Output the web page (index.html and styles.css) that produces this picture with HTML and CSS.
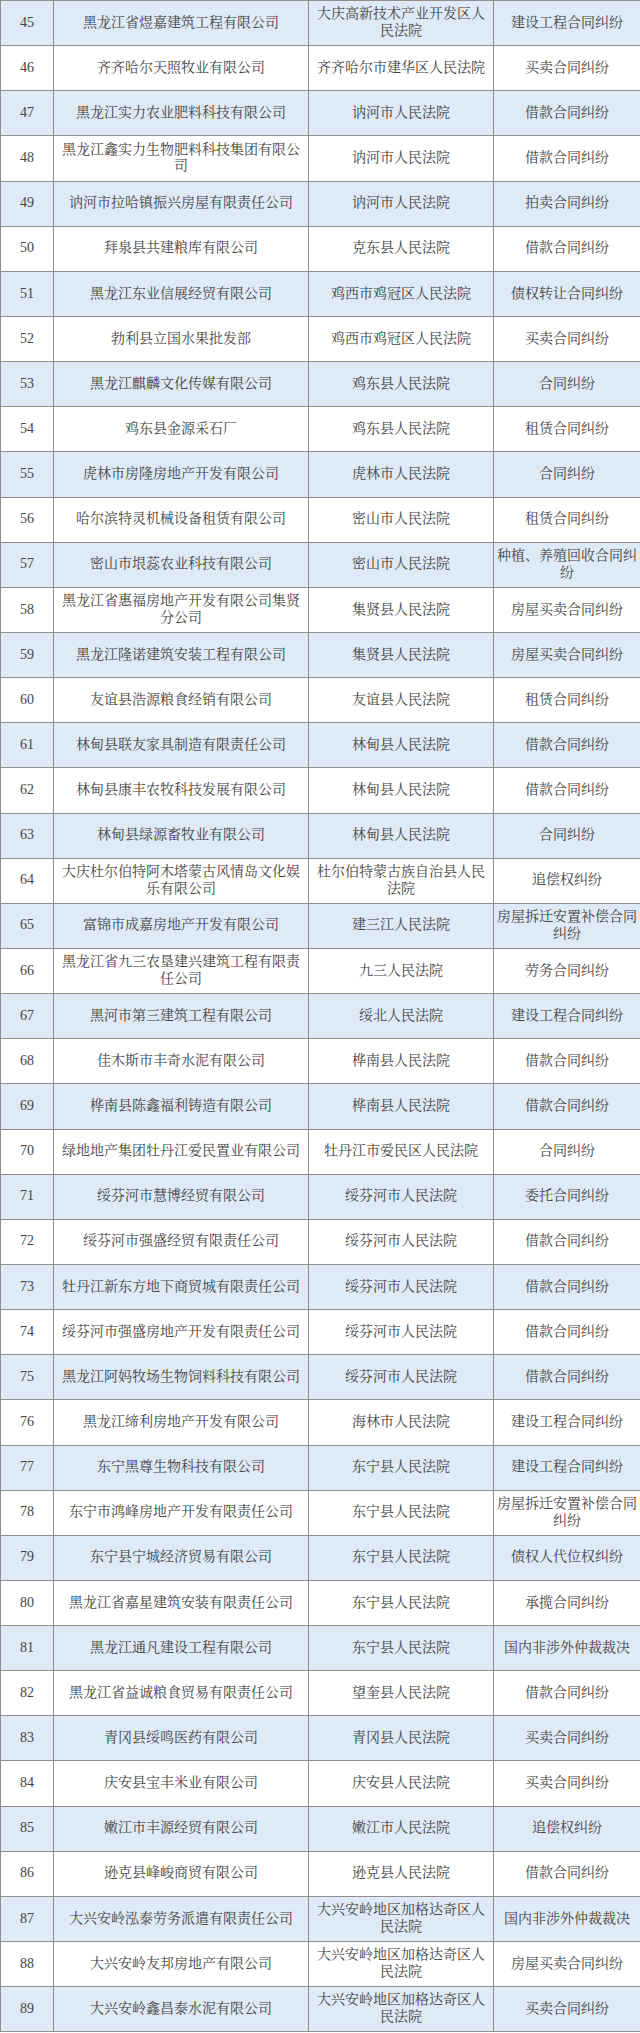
FILE: index.html
```html
<!DOCTYPE html>
<html lang="zh-CN">
<head>
<meta charset="utf-8">
<title>列表</title>
<link rel="stylesheet" href="styles.css">
</head>
<body>
<table class="list">
<tbody>
<tr class="odd"><td class="c-no">45</td><td class="c-co">黑龙江省煜嘉建筑工程有限公司</td><td class="c-court">大庆高新技术产业开发区人民法院</td><td class="c-case">建设工程合同纠纷</td></tr>
<tr><td class="c-no">46</td><td class="c-co">齐齐哈尔天照牧业有限公司</td><td class="c-court">齐齐哈尔市建华区人民法院</td><td class="c-case">买卖合同纠纷</td></tr>
<tr class="odd"><td class="c-no">47</td><td class="c-co">黑龙江实力农业肥料科技有限公司</td><td class="c-court">讷河市人民法院</td><td class="c-case">借款合同纠纷</td></tr>
<tr><td class="c-no">48</td><td class="c-co">黑龙江鑫实力生物肥料科技集团有限公司</td><td class="c-court">讷河市人民法院</td><td class="c-case">借款合同纠纷</td></tr>
<tr class="odd"><td class="c-no">49</td><td class="c-co">讷河市拉哈镇振兴房屋有限责任公司</td><td class="c-court">讷河市人民法院</td><td class="c-case">拍卖合同纠纷</td></tr>
<tr><td class="c-no">50</td><td class="c-co">拜泉县共建粮库有限公司</td><td class="c-court">克东县人民法院</td><td class="c-case">借款合同纠纷</td></tr>
<tr class="odd"><td class="c-no">51</td><td class="c-co">黑龙江东业信展经贸有限公司</td><td class="c-court">鸡西市鸡冠区人民法院</td><td class="c-case">债权转让合同纠纷</td></tr>
<tr><td class="c-no">52</td><td class="c-co">勃利县立国水果批发部</td><td class="c-court">鸡西市鸡冠区人民法院</td><td class="c-case">买卖合同纠纷</td></tr>
<tr class="odd"><td class="c-no">53</td><td class="c-co">黑龙江麒麟文化传媒有限公司</td><td class="c-court">鸡东县人民法院</td><td class="c-case">合同纠纷</td></tr>
<tr><td class="c-no">54</td><td class="c-co">鸡东县金源采石厂</td><td class="c-court">鸡东县人民法院</td><td class="c-case">租赁合同纠纷</td></tr>
<tr class="odd"><td class="c-no">55</td><td class="c-co">虎林市房隆房地产开发有限公司</td><td class="c-court">虎林市人民法院</td><td class="c-case">合同纠纷</td></tr>
<tr><td class="c-no">56</td><td class="c-co">哈尔滨特灵机械设备租赁有限公司</td><td class="c-court">密山市人民法院</td><td class="c-case">租赁合同纠纷</td></tr>
<tr class="odd"><td class="c-no">57</td><td class="c-co">密山市垠蕊农业科技有限公司</td><td class="c-court">密山市人民法院</td><td class="c-case">种植、养殖回收合同纠纷</td></tr>
<tr><td class="c-no">58</td><td class="c-co">黑龙江省惠福房地产开发有限公司集贤分公司</td><td class="c-court">集贤县人民法院</td><td class="c-case">房屋买卖合同纠纷</td></tr>
<tr class="odd"><td class="c-no">59</td><td class="c-co">黑龙江隆诺建筑安装工程有限公司</td><td class="c-court">集贤县人民法院</td><td class="c-case">房屋买卖合同纠纷</td></tr>
<tr><td class="c-no">60</td><td class="c-co">友谊县浩源粮食经销有限公司</td><td class="c-court">友谊县人民法院</td><td class="c-case">租赁合同纠纷</td></tr>
<tr class="odd"><td class="c-no">61</td><td class="c-co">林甸县联友家具制造有限责任公司</td><td class="c-court">林甸县人民法院</td><td class="c-case">借款合同纠纷</td></tr>
<tr><td class="c-no">62</td><td class="c-co">林甸县康丰农牧科技发展有限公司</td><td class="c-court">林甸县人民法院</td><td class="c-case">借款合同纠纷</td></tr>
<tr class="odd"><td class="c-no">63</td><td class="c-co">林甸县绿源畜牧业有限公司</td><td class="c-court">林甸县人民法院</td><td class="c-case">合同纠纷</td></tr>
<tr><td class="c-no">64</td><td class="c-co">大庆杜尔伯特阿木塔蒙古风情岛文化娱乐有限公司</td><td class="c-court">杜尔伯特蒙古族自治县人民法院</td><td class="c-case">追偿权纠纷</td></tr>
<tr class="odd"><td class="c-no">65</td><td class="c-co">富锦市成嘉房地产开发有限公司</td><td class="c-court">建三江人民法院</td><td class="c-case">房屋拆迁安置补偿合同纠纷</td></tr>
<tr><td class="c-no">66</td><td class="c-co">黑龙江省九三农垦建兴建筑工程有限责任公司</td><td class="c-court">九三人民法院</td><td class="c-case">劳务合同纠纷</td></tr>
<tr class="odd"><td class="c-no">67</td><td class="c-co">黑河市第三建筑工程有限公司</td><td class="c-court">绥北人民法院</td><td class="c-case">建设工程合同纠纷</td></tr>
<tr><td class="c-no">68</td><td class="c-co">佳木斯市丰奇水泥有限公司</td><td class="c-court">桦南县人民法院</td><td class="c-case">借款合同纠纷</td></tr>
<tr class="odd"><td class="c-no">69</td><td class="c-co">桦南县陈鑫福利铸造有限公司</td><td class="c-court">桦南县人民法院</td><td class="c-case">借款合同纠纷</td></tr>
<tr><td class="c-no">70</td><td class="c-co">绿地地产集团牡丹江爱民置业有限公司</td><td class="c-court">牡丹江市爱民区人民法院</td><td class="c-case">合同纠纷</td></tr>
<tr class="odd"><td class="c-no">71</td><td class="c-co">绥芬河市慧博经贸有限公司</td><td class="c-court">绥芬河市人民法院</td><td class="c-case">委托合同纠纷</td></tr>
<tr><td class="c-no">72</td><td class="c-co">绥芬河市强盛经贸有限责任公司</td><td class="c-court">绥芬河市人民法院</td><td class="c-case">借款合同纠纷</td></tr>
<tr class="odd"><td class="c-no">73</td><td class="c-co">牡丹江新东方地下商贸城有限责任公司</td><td class="c-court">绥芬河市人民法院</td><td class="c-case">借款合同纠纷</td></tr>
<tr><td class="c-no">74</td><td class="c-co">绥芬河市强盛房地产开发有限责任公司</td><td class="c-court">绥芬河市人民法院</td><td class="c-case">借款合同纠纷</td></tr>
<tr class="odd"><td class="c-no">75</td><td class="c-co">黑龙江阿妈牧场生物饲料科技有限公司</td><td class="c-court">绥芬河市人民法院</td><td class="c-case">借款合同纠纷</td></tr>
<tr><td class="c-no">76</td><td class="c-co">黑龙江缔利房地产开发有限公司</td><td class="c-court">海林市人民法院</td><td class="c-case">建设工程合同纠纷</td></tr>
<tr class="odd"><td class="c-no">77</td><td class="c-co">东宁黑尊生物科技有限公司</td><td class="c-court">东宁县人民法院</td><td class="c-case">建设工程合同纠纷</td></tr>
<tr><td class="c-no">78</td><td class="c-co">东宁市鸿峰房地产开发有限责任公司</td><td class="c-court">东宁县人民法院</td><td class="c-case">房屋拆迁安置补偿合同纠纷</td></tr>
<tr class="odd"><td class="c-no">79</td><td class="c-co">东宁县宁城经济贸易有限公司</td><td class="c-court">东宁县人民法院</td><td class="c-case">债权人代位权纠纷</td></tr>
<tr><td class="c-no">80</td><td class="c-co">黑龙江省嘉星建筑安装有限责任公司</td><td class="c-court">东宁县人民法院</td><td class="c-case">承揽合同纠纷</td></tr>
<tr class="odd"><td class="c-no">81</td><td class="c-co">黑龙江通凡建设工程有限公司</td><td class="c-court">东宁县人民法院</td><td class="c-case">国内非涉外仲裁裁决</td></tr>
<tr><td class="c-no">82</td><td class="c-co">黑龙江省益诚粮食贸易有限责任公司</td><td class="c-court">望奎县人民法院</td><td class="c-case">借款合同纠纷</td></tr>
<tr class="odd"><td class="c-no">83</td><td class="c-co">青冈县绥鸣医药有限公司</td><td class="c-court">青冈县人民法院</td><td class="c-case">买卖合同纠纷</td></tr>
<tr><td class="c-no">84</td><td class="c-co">庆安县宝丰米业有限公司</td><td class="c-court">庆安县人民法院</td><td class="c-case">买卖合同纠纷</td></tr>
<tr class="odd"><td class="c-no">85</td><td class="c-co">嫩江市丰源经贸有限公司</td><td class="c-court">嫩江市人民法院</td><td class="c-case">追偿权纠纷</td></tr>
<tr><td class="c-no">86</td><td class="c-co">逊克县峰峻商贸有限公司</td><td class="c-court">逊克县人民法院</td><td class="c-case">借款合同纠纷</td></tr>
<tr class="odd"><td class="c-no">87</td><td class="c-co">大兴安岭泓泰劳务派遣有限责任公司</td><td class="c-court">大兴安岭地区加格达奇区人民法院</td><td class="c-case">国内非涉外仲裁裁决</td></tr>
<tr><td class="c-no">88</td><td class="c-co">大兴安岭友邦房地产有限公司</td><td class="c-court">大兴安岭地区加格达奇区人民法院</td><td class="c-case">房屋买卖合同纠纷</td></tr>
<tr class="odd"><td class="c-no">89</td><td class="c-co">大兴安岭鑫昌泰水泥有限公司</td><td class="c-court">大兴安岭地区加格达奇区人民法院</td><td class="c-case">买卖合同纠纷</td></tr>
</tbody>
</table>
</body>
</html>
```
FILE: styles.css
```css
html, body {
  margin: 0;
  padding: 0;
  background: #ffffff;
  overflow: hidden;
}

.list {
  width: 640px;
  table-layout: fixed;
  border-collapse: separate;
  border-spacing: 0;
  border-top: 1px solid #8e8e8e;
  border-left: 1px solid #8e8e8e;
  font-family: "Liberation Serif", "Noto Serif CJK SC", "Noto Sans CJK SC", serif;
  font-size: 14px;
  line-height: 1.2;
  color: #444444;
}

.list td {
  box-sizing: border-box;
  height: 45.155px;
  padding: 0 2px;
  text-align: center;
  vertical-align: middle;
  border-right: 1px solid #8e8e8e;
  border-bottom: 1px solid #8e8e8e;
  word-break: break-all;
}

.list tr.odd td {
  background: #deeaf6;
}

.list td.c-no {
  width: 53px;
}

.list td.c-co {
  width: 255px;
}

.list td.c-court {
  width: 185px;
}

.list td.c-case {
  width: 146px;
  border-right: none;
}
```
